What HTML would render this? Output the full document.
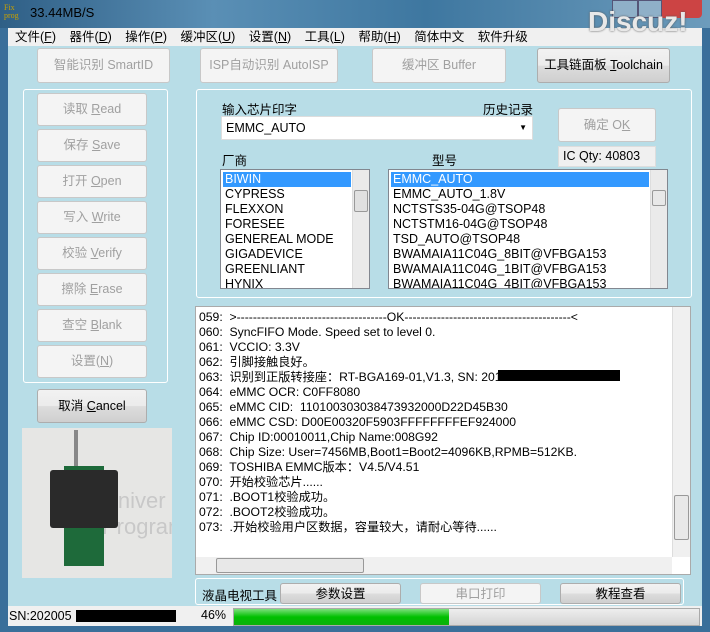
<!DOCTYPE html>
<html><head><meta charset="utf-8"><style>
*{box-sizing:border-box;margin:0;padding:0}
body{width:710px;height:632px;overflow:hidden;position:relative;font-family:"Liberation Sans","Noto Sans CJK SC",sans-serif;font-size:12px;background:#3a6f9a}
.a{position:absolute}
.btn{position:absolute;border:1px solid #adadad;border-radius:3px;background:linear-gradient(#f2f2f2,#ebebeb 50%,#dddddd 51%,#cfcfcf);text-align:center;color:#000;font-size:12.5px}
.dis{background:#f4f4f4;color:#a0a0a0;border-color:#c8c8c8}
.grp{position:absolute;border:1px solid #fff;border-radius:3px}
.list{position:absolute;background:#fff;border:1px solid #828790;font-size:12.5px;line-height:15px;overflow:hidden}
.sb{position:absolute;background:#eaeaea;border-left:1px solid #ddd}
</style></head><body>
<div class="a" style="left:0;top:0;width:710px;height:28px;background:linear-gradient(90deg,#2f5f86,#5a8fb5 30%,#3e77a0 60%,#6d9cbc)"></div>
<div class="a" style="left:4px;top:4px;font-size:8px;color:#c8a000;line-height:8px;font-family:'Liberation Serif',serif">Fix<br>prog</div>
<div class="a" style="left:30px;top:5px;font-size:13px;color:#000">33.44MB/S</div>
<div class="a" style="left:612px;top:0;width:26px;height:18px;background:#8fb0c8;border:1px solid #557"></div>
<div class="a" style="left:638px;top:0;width:24px;height:18px;background:#8fb0c8;border:1px solid #557"></div>
<div class="a" style="left:662px;top:0;width:40px;height:18px;background:#c44;border-radius:0 0 4px 0"></div>
<div class="a" style="left:588px;top:6px;font-size:28px;font-weight:bold;color:#e8e8e8;text-shadow:0 0 2px #555;z-index:2">Discuz!</div>
<div class="a" style="left:8px;top:28px;width:694px;height:18px;background:#f0f0f0;font-size:12.5px;line-height:18px;word-spacing:10px;padding-left:7px">文件(<u>F</u>) 器件(<u>D</u>) 操作(<u>P</u>) 缓冲区(<u>U</u>) 设置(<u>N</u>) 工具(<u>L</u>) 帮助(<u>H</u>) 简体中文 软件升级</div>
<div class="a" style="left:8px;top:46px;width:694px;height:560px;background:#b8dde7"></div>
<div class="btn dis" style="left:37px;top:48px;width:133px;height:35px;line-height:33px">智能识别 SmartID</div>
<div class="btn dis" style="left:200px;top:48px;width:138px;height:35px;line-height:33px">ISP自动识别 AutoISP</div>
<div class="btn dis" style="left:372px;top:48px;width:134px;height:35px;line-height:33px">缓冲区 Buffer</div>
<div class="btn" style="left:537px;top:48px;width:133px;height:35px;line-height:33px">工具链面板 <u>T</u>oolchain</div>
<div class="grp" style="left:23px;top:89px;width:145px;height:294px"></div>
<div class="btn dis" style="left:37px;top:93px;width:110px;height:33px;line-height:31px">读取 <u>R</u>ead</div>
<div class="btn dis" style="left:37px;top:129px;width:110px;height:33px;line-height:31px">保存 <u>S</u>ave</div>
<div class="btn dis" style="left:37px;top:165px;width:110px;height:33px;line-height:31px">打开 <u>O</u>pen</div>
<div class="btn dis" style="left:37px;top:201px;width:110px;height:33px;line-height:31px">写入 <u>W</u>rite</div>
<div class="btn dis" style="left:37px;top:237px;width:110px;height:33px;line-height:31px">校验 <u>V</u>erify</div>
<div class="btn dis" style="left:37px;top:273px;width:110px;height:33px;line-height:31px">擦除 <u>E</u>rase</div>
<div class="btn dis" style="left:37px;top:309px;width:110px;height:33px;line-height:31px">查空 <u>B</u>lank</div>
<div class="btn dis" style="left:37px;top:345px;width:110px;height:33px;line-height:31px">设置(<u>N</u>)</div>
<div class="btn" style="left:37px;top:389px;width:110px;height:34px;line-height:32px">取消 <u>C</u>ancel</div>
<div class="a" style="left:22px;top:428px;width:150px;height:150px;background:#e6e6e4;overflow:hidden">
 <div class="a" style="left:80px;top:60px;font-size:22px;color:#c8c8c8">Univer<br>Program</div>
 <div class="a" style="left:42px;top:38px;width:40px;height:100px;background:#1e6a3a"></div>
 <div class="a" style="left:28px;top:42px;width:68px;height:58px;background:#2a2a2a;border-radius:3px"></div>
 <div class="a" style="left:52px;top:2px;width:4px;height:36px;background:#888"></div>
</div>
<div class="grp" style="left:196px;top:89px;width:496px;height:209px"></div>
<div class="a" style="left:222px;top:99px;font-size:12.5px">输入芯片印字</div>
<div class="a" style="left:483px;top:99px;font-size:12.5px">历史记录</div>
<div class="a" style="left:221px;top:116px;width:312px;height:24px;background:#fff;border:1px solid #ddd;font-size:12.5px;line-height:22px;padding-left:4px">EMMC_AUTO<span class="a" style="right:5px;top:0;font-size:8px">▼</span></div>
<div class="btn dis" style="left:558px;top:108px;width:98px;height:34px;line-height:32px">确定 O<u>K</u></div>
<div class="a" style="left:558px;top:146px;width:98px;height:21px;background:#f0f0f0;border:1px solid #ddd;font-size:12.5px;line-height:19px;padding-left:4px">IC Qty: 40803</div>
<div class="a" style="left:222px;top:150px;font-size:12.5px">厂商</div>
<div class="a" style="left:432px;top:150px;font-size:12.5px">型号</div>
<div class="list" style="left:220px;top:169px;width:150px;height:120px;padding:2px">
 <div style="background:#3399ff;color:#fff;width:128px;padding-left:2px">BIWIN</div>
 <div style="padding-left:2px">CYPRESS<br>FLEXXON<br>FORESEE<br>GENEREAL MODE<br>GIGADEVICE<br>GREENLIANT<br>HYNIX</div>
 <div class="sb" style="left:131px;top:0;width:17px;height:118px"><div class="a" style="left:1px;top:20px;width:14px;height:22px;background:#e0e0e0;border:1px solid #999;border-radius:2px"></div></div>
</div>
<div class="list" style="left:388px;top:169px;width:280px;height:120px;padding:2px">
 <div style="background:#3399ff;color:#fff;width:258px;padding-left:2px">EMMC_AUTO</div>
 <div style="padding-left:2px">EMMC_AUTO_1.8V<br>NCTSTS35-04G@TSOP48<br>NCTSTM16-04G@TSOP48<br>TSD_AUTO@TSOP48<br>BWAMAIA11C04G_8BIT@VFBGA153<br>BWAMAIA11C04G_1BIT@VFBGA153<br>BWAMAIA11C04G_4BIT@VFBGA153</div>
 <div class="sb" style="left:261px;top:0;width:17px;height:118px"><div class="a" style="left:1px;top:20px;width:14px;height:16px;background:#e8e8e8;border:1px solid #999;border-radius:2px"></div></div>
</div>
<div class="a" style="left:195px;top:306px;width:496px;height:269px;background:#fff;border:1px solid #aaa"></div>
<div class="a" style="left:199px;top:310px;font-size:12.2px;line-height:15px;white-space:pre">059:  &gt;-------------------------------------OK-----------------------------------------&lt;
060:  SyncFIFO Mode. Speed set to level 0.
061:  VCCIO: 3.3V
062:  引脚接触良好。
063:  识别到正版转接座：RT-BGA169-01,V1.3, SN: 2016
064:  eMMC OCR: C0FF8080
065:  eMMC CID:  110100303038473932000D22D45B30
066:  eMMC CSD: D00E00320F5903FFFFFFFFEF924000
067:  Chip ID:00010011,Chip Name:008G92
068:  Chip Size: User=7456MB,Boot1=Boot2=4096KB,RPMB=512KB.
069:  TOSHIBA EMMC版本：V4.5/V4.51
070:  开始校验芯片......
071:  .BOOT1校验成功。
072:  .BOOT2校验成功。
073:  .开始校验用户区数据，容量较大，请耐心等待......</div>
<div class="a" style="left:498px;top:370px;width:122px;height:11px;background:#000"></div>
<div class="sb" style="left:672px;top:307px;width:18px;height:250px;background:#f0f0f0"><div class="a" style="left:1px;top:188px;width:15px;height:45px;background:#e8e8e8;border:1px solid #999;border-radius:2px"></div></div>
<div class="a" style="left:196px;top:557px;width:476px;height:17px;background:#f0f0f0"><div class="a" style="left:20px;top:1px;width:148px;height:15px;background:#e8e8e8;border:1px solid #999;border-radius:2px"></div></div>
<div class="grp" style="left:195px;top:578px;width:489px;height:27px"></div>
<div class="a" style="left:202px;top:585px;font-size:12.5px">液晶电视工具</div>
<div class="btn" style="left:280px;top:583px;width:121px;height:21px;line-height:20px">参数设置</div>
<div class="btn dis" style="left:420px;top:583px;width:121px;height:21px;line-height:20px">串口打印</div>
<div class="btn" style="left:560px;top:583px;width:121px;height:21px;line-height:20px">教程查看</div>
<div class="a" style="left:8px;top:606px;width:694px;height:20px;background:#f0f0f0"></div>
<div class="a" style="left:9px;top:609px;font-size:12.5px">SN:202005</div>
<div class="a" style="left:76px;top:610px;width:100px;height:12px;background:#000"></div>
<div class="a" style="left:201px;top:608px;font-size:12.5px">46%</div>
<div class="a" style="left:233px;top:608px;width:467px;height:18px;background:linear-gradient(#eee,#d4d4d4);border:1px solid #aaa"><div style="width:215px;height:16px;background:linear-gradient(#7be07b,#00c000 50%,#0cb00c)"></div></div>
</body></html>
